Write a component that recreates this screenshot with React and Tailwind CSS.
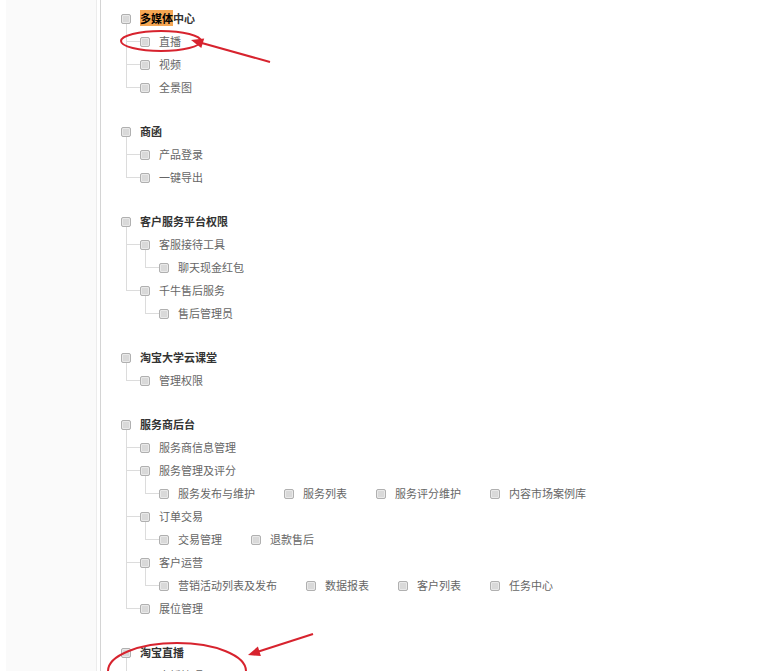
const tree = [
  {
    label: '多媒体中心',
    mark: 3,
    children: [{ label: '直播' }, { label: '视频' }, { label: '全景图' }],
  },
  { label: '商函', children: [{ label: '产品登录' }, { label: '一键导出' }] },
  {
    label: '客户服务平台权限',
    children: [
      { label: '客服接待工具', sub: ['聊天现金红包'] },
      { label: '千牛售后服务', sub: ['售后管理员'] },
    ],
  },
  { label: '淘宝大学云课堂', children: [{ label: '管理权限' }] },
  {
    label: '服务商后台',
    children: [
      { label: '服务商信息管理' },
      { label: '服务管理及评分', sub: ['服务发布与维护', '服务列表', '服务评分维护', '内容市场案例库'] },
      { label: '订单交易', sub: ['交易管理', '退款售后'] },
      { label: '客户运营', sub: ['营销活动列表及发布', '数据报表', '客户列表', '任务中心'] },
      { label: '展位管理' },
    ],
  },
  { label: '淘宝直播', children: [{ label: '直播管理' }, { label: '主播管理' }] },
]

const Check = () => (
  <span className="box-border block h-[10px] w-[10px] shrink-0 rounded-[2px] border border-[#b0b0b0] bg-[#d9d9d9] shadow-[inset_0_0_0_1px_#e9e9e9]" />
)

const Child = ({ item, last }) => (
  <div className={last ? '' : 'border-l border-[#dcdcdc]'}>
    <div className="flex h-[23px] items-center">
      {last ? (
        <span className="box-border h-[12px] w-[14px] self-start border-b border-l border-[#dcdcdc]" />
      ) : (
        <span className="h-px w-[13px] bg-[#dcdcdc]" />
      )}
      <Check />
      <span className="ml-[9px] text-[#666]">{item.label}</span>
    </div>
    {item.sub && (
      <div className={`flex h-[23px] items-center ${last ? 'ml-[19px]' : 'ml-[18px]'}`}>
        <span className="-mt-[6px] box-border h-[18px] w-[14px] self-start border-b border-l border-[#dcdcdc]" />
        <div className="flex items-center gap-[29px]">
          {item.sub.map((s) => (
            <div key={s} className="flex items-center">
              <Check />
              <span className="ml-[9px] text-[#666]">{s}</span>
            </div>
          ))}
        </div>
      </div>
    )}
  </div>
)

const Group = ({ group }) => (
  <div className="mb-[21px]">
    <div className="flex h-[23px] items-center">
      <Check />
      <span className="ml-[9px] font-bold text-[#333]">
        {group.mark ? (
          <>
            <span className="bg-[#f5a652] text-black">{group.label.slice(0, group.mark)}</span>
            {group.label.slice(group.mark)}
          </>
        ) : (
          group.label
        )}
      </span>
    </div>
    <div className="-mt-[6px] ml-[5px] h-[6px] border-l border-[#dcdcdc]" />
    <div className="ml-[5px]">
      {group.children.map((c, i) => (
        <Child key={c.label} item={c} last={i === group.children.length - 1} />
      ))}
    </div>
  </div>
)

const Marks = () => (
  <svg className="pointer-events-none absolute inset-0" width="765" height="671" viewBox="0 0 765 671">
    <g fill="none" stroke="#d7232e" strokeWidth="2">
      <ellipse cx="161" cy="41" rx="40" ry="10" />
      <line x1="270" y1="62" x2="200" y2="42.5" />
      <ellipse cx="177" cy="671" rx="69" ry="28" />
      <line x1="313" y1="634" x2="257" y2="652" />
    </g>
    <g fill="#d7232e">
      <polygon points="191,40 204.2,38.4 201.3,48" />
      <polygon points="248,655 260.9,656.1 257.9,646.5" />
    </g>
  </svg>
)

export default function App() {
  return (
    <div className="relative flex h-[671px] overflow-hidden bg-white font-['Noto_Sans_CJK_SC',sans-serif] text-[11px] leading-[23px]">
      <div className="w-[6px] shrink-0" />
      <div className="w-[91px] shrink-0 border-r border-[#ececec] bg-[#fafafa]" />
      <div className="w-[3px] shrink-0" />
      <div className="w-px shrink-0 bg-[#d4d4d4]" />
      <div className="flex-1 pl-[20px] pt-[7px]">
        {tree.map((g) => (
          <Group key={g.label} group={g} />
        ))}
      </div>
      <Marks />
    </div>
  )
}
